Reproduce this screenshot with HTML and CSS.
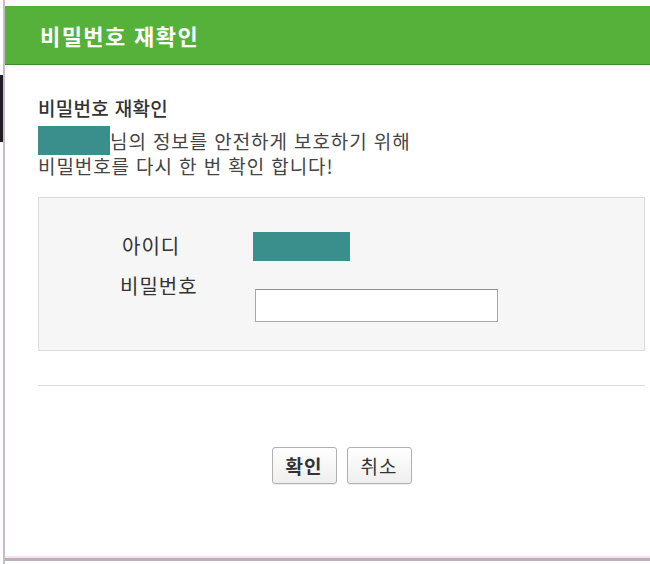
FILE: index.html
```html
<!DOCTYPE html>
<html lang="ko">
<head>
<meta charset="utf-8">
<title>비밀번호 재확인</title>
<link rel="stylesheet" href="styles.css">
</head>
<body>
<div class="window">
  <div class="edge"><div class="edge-mark"></div></div>
  <div class="dialog">
    <div class="topgap"></div>
    <div class="header">비밀번호 재확인</div>
    <div class="content">
      <h2 class="heading">비밀번호 재확인</h2>
      <div class="msg">
        <div class="msg-row"><span class="mask mask-name"></span><span>님의 정보를 안전하게 보호하기 위해</span></div>
        <div class="msg-row">비밀번호를 다시 한 번 확인 합니다!</div>
      </div>
      <div class="form-box">
        <div class="form-grid">
          <div class="label label-id">아이디</div>
          <div class="value"><span class="mask mask-id"></span></div>
          <div class="label label-pw">비밀번호</div>
          <div class="value"><input class="pw-input" type="password"></div>
        </div>
      </div>
      <div class="divider"></div>
      <div class="buttons">
        <button class="btn btn-ok">확인</button>
        <button class="btn">취소</button>
      </div>
    </div>
    <div class="bottom-line"></div>
    <div class="bottom-bar"></div>
  </div>
</div>
</body>
</html>
```
FILE: styles.css
```css
html, body {
  margin: 0;
  padding: 0;
  background: #ffffff;
}
body {
  font-family: "Noto Sans CJK KR", "Noto Sans", sans-serif;
  color: #333333;
}
.window {
  width: 650px;
  height: 564px;
  display: flex;
  overflow: hidden;
}
.edge {
  width: 3px;
  flex: none;
  border-right: 2px solid #c6bec6;
  display: flex;
  flex-direction: column;
}
.edge-mark {
  margin-top: 75px;
  height: 67px;
  width: 3px;
  background: #1e1e24;
}
.dialog {
  flex: 1;
  display: flex;
  flex-direction: column;
  min-width: 0;
}
.topgap {
  height: 6px;
  background: #fbfbfb;
}
.header {
  height: 58px;
  background: #56b13b;
  border-bottom: 1px solid #3e8a2b;
  color: #ffffff;
  font-size: 22px;
  font-weight: 700;
  line-height: 58px;
  padding-left: 35px;
  letter-spacing: 1.4px;
  box-sizing: content-box;
}
.content {
  flex: 1;
  padding: 31px 5px 0 33px;
  display: flex;
  flex-direction: column;
}
.heading {
  margin: 0;
  font-size: 19px;
  font-weight: 500;
  line-height: 24px;
  letter-spacing: 0.3px;
  color: #333333;
}
.msg {
  margin-top: 8px;
  font-size: 19px;
  line-height: 25px;
  letter-spacing: 0.9px;
  color: #444444;
}
.msg-row {
  height: 25px;
  display: flex;
  align-items: center;
  white-space: nowrap;
}
.mask {
  display: inline-block;
  background: #3a8e8c;
  flex: none;
}
.mask-name {
  width: 72px;
  height: 29px;
}
.form-box {
  margin-top: 19px;
  border: 1px solid #dcdcdc;
  background: #f6f6f6;
  padding: 34px 0 0 83px;
  box-sizing: content-box;
  height: 118px;
}
.form-grid {
  display: grid;
  grid-template-columns: 131px 1fr;
  grid-template-rows: 29px 52px;
  row-gap: 9px;
  font-size: 20px;
  letter-spacing: 1px;
}
.label {
  color: #333333;
}
.label-id {
  line-height: 27px;
}
.label-pw {
  line-height: 32px;
  margin-left: -2px;
}
.mask-id {
  width: 97px;
  height: 29px;
}
.pw-input {
  margin-top: 19px;
  width: 243px;
  height: 33px;
  box-sizing: border-box;
  border: 1px solid #a8a8a8;
  border-top-color: #8e8e8e;
  background: #ffffff;
  padding: 0 6px;
  margin-left: 2px;
  outline: none;
}
.divider {
  margin-top: 34px;
  height: 1px;
  background: #dcdcdc;
}
.buttons {
  margin-top: 61px;
  display: flex;
  justify-content: center;
  gap: 10px;
}
.btn {
  width: 65px;
  height: 37px;
  border: 1px solid #b0b0b0;
  border-radius: 3px;
  background: linear-gradient(#ffffff, #eeeeee);
  font-family: "Noto Sans CJK KR", "Noto Sans", sans-serif;
  font-size: 19px;
  letter-spacing: 1px;
  color: #333333;
  padding: 0;
  box-shadow: 0 1px 1px rgba(0,0,0,0.08);
}
.btn-ok {
  font-weight: 700;
}
.bottom-line {
  height: 2px;
  background: #f2e6ec;
}
.bottom-bar {
  height: 3px;
  background: #bcaebc;
  margin-bottom: 3px;
}
```
